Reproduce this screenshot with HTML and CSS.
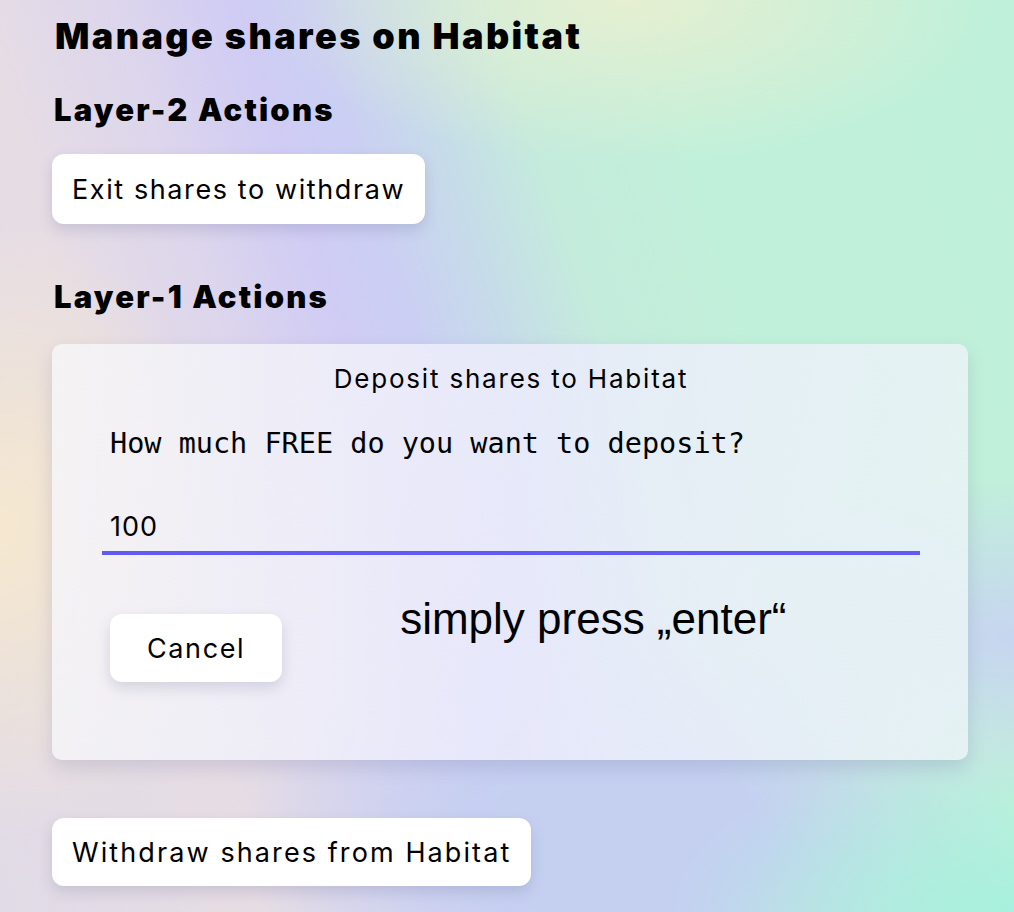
FILE: index.html
```html
<!DOCTYPE html>
<html lang="en">
<head>
  <meta charset="UTF-8">
  <title>Manage shares on Habitat</title>
  <link rel="stylesheet" href="styles.css">
</head>
<body>
  <main class="page">
    <h1>Manage shares on Habitat</h1>

    <h2>Layer-2 Actions</h2>
    <button class="btn">Exit shares to withdraw</button>

    <h2 class="l1">Layer-1 Actions</h2>
    <section class="panel">
      <div class="panel-title">Deposit shares to Habitat</div>
      <label class="question" for="amount">How much FREE do you want to deposit?</label>
      <input id="amount" class="amount" type="text" value="100">
      <div class="actions">
        <button class="btn cancel">Cancel</button>
        <span class="hint">simply press „enter“</span>
      </div>
    </section>

    <button class="btn withdraw">Withdraw shares from Habitat</button>
  </main>
</body>
</html>
```

FILE: styles.css
```css
html, body {
  margin: 0;
  height: 100%;
}
body {
  font-family: 'Inter', sans-serif;
  color: #000;
  background:
    radial-gradient(ellipse 22% 34% at 0% 58%, #f6e8cf 0%, rgba(246, 232, 207, 0) 100%),
    radial-gradient(ellipse 36% 18% at 62% 0%, #e6efd1 0%, rgba(230, 239, 209, 0) 100%),
    radial-gradient(ellipse 30% 18% at 100% 70%, #c7d5f0 0%, rgba(199, 213, 240, 0) 100%),
    radial-gradient(ellipse 34% 18% at 100% 100%, #a7f0dd 0%, rgba(167, 240, 221, 0) 100%),
    radial-gradient(ellipse 38% 26% at 62% 92%, #c5d0f1 0%, #c5d0f1 35%, rgba(197, 208, 241, 0) 100%),
    linear-gradient(72deg, #e1dbe7 0%, #e6dde4 20%, #ddd6ec 31%, #d0ccf4 40%, #cbcff3 46%, #c6dce9 53%, #c4ebdc 60%, #c1f0da 72%, #bff0da 100%);
  overflow: hidden;
}
.page {
  padding: 0 46px 0 52px;
}
h1 {
  font-weight: 900;
  font-size: 36px;
  letter-spacing: 2.4px;
  margin: 0;
  padding: 14px 0 0 3px;
  line-height: 44px;
}
h2 {
  font-weight: 900;
  font-size: 31px;
  letter-spacing: 2.2px;
  margin: 32px 0 24px;
  padding-left: 2px;
  line-height: 40px;
}
h2.l1 {
  margin-top: 53px;
  margin-bottom: 27px;
}
.btn {
  display: block;
  font-family: 'Inter', sans-serif;
  font-size: 27px;
  letter-spacing: 1.6px;
  color: #000;
  background: #fff;
  border: none;
  border-radius: 12px;
  padding: 0 20px;
  height: 70px;
  box-shadow: 0 6px 14px rgba(80, 80, 120, 0.18);
  cursor: pointer;
}
.panel {
  background: linear-gradient(100deg, rgba(245, 244, 245, 0.92) 0%, rgba(236, 236, 252, 0.85) 50%, rgba(234, 244, 246, 0.85) 100%);
  border-radius: 10px;
  box-shadow: 0 8px 18px rgba(90, 90, 140, 0.18);
  padding: 18px 48px 78px 50px;
}
.panel-title {
  text-align: center;
  font-size: 26px;
  letter-spacing: 1.8px;
  line-height: 34px;
  margin-bottom: 30px;
}
.question {
  display: block;
  font-family: 'DejaVu Sans Mono', monospace;
  font-size: 28.5px;
  line-height: 36px;
  padding-left: 8px;
  margin-bottom: 48px;
}
.amount {
  display: block;
  width: 100%;
  box-sizing: border-box;
  font-family: 'Inter', sans-serif;
  font-size: 27px;
  letter-spacing: 1px;
  padding: 0 8px 8px;
  border: none;
  border-bottom: 4px solid #625af5;
  background: transparent;
  outline: none;
}
.actions {
  display: flex;
  align-items: flex-start;
  margin-top: 42px;
  padding-left: 8px;
}
.cancel {
  margin-top: 17px;
  height: 68px;
  padding: 0 37px;
}
.hint {
  font-family: 'Liberation Sans', Arial, sans-serif;
  font-size: 44px;
  line-height: 50px;
  margin-top: -3px;
  margin-left: 118px;
}
.withdraw {
  margin-top: 58px;
  height: 68px;
  letter-spacing: 2.1px;
}
```
